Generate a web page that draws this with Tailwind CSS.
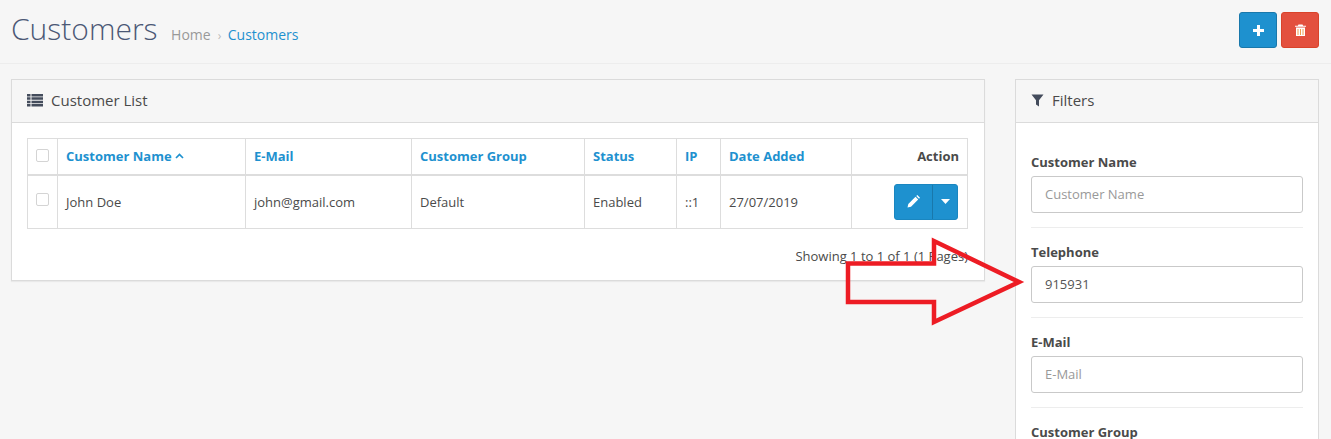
<!DOCTYPE html>
<html>
<head>
<meta charset="utf-8">
<script src="https://cdn.jsdelivr.net/npm/@tailwindcss/browser@4"></script>
</head>
<body class="relative h-[439px] w-[1331px] overflow-hidden bg-[#f6f6f6] font-['Open_Sans',sans-serif] text-[13px] text-[#4a4a4a]">
<header class="flex h-[64px] items-start justify-between border-b border-[#ededed] pl-[11px] pr-[12px]">
  <div class="flex items-baseline pt-[8px]">
    <h1 class="text-[30px] leading-[41px] font-light text-[#4b5875]">Customers</h1>
    <nav class="ml-[13.5px] flex items-baseline text-[14px] leading-[20px]">
      <span class="text-[#999]">Home</span>
      <span class="ml-[7px] mr-[6.500px] text-[12px] text-[#bbb]">›</span>
      <span class="text-[#1e91cf]">Customers</span>
    </nav>
  </div>
  <div class="flex gap-[4px] pt-[12px]">
    <div class="flex h-[36px] w-[38px] items-center justify-center rounded-[3px] border border-[#1978ab] bg-[#1e91cf]">
      <svg width="11" height="11" viewBox="0 0 11 11"><path d="M4 0h3v4h4v3H7v4H4V7H0V4h4z" fill="#fff"/></svg>
    </div>
    <div class="flex h-[36px] w-[38px] items-center justify-center rounded-[3px] border border-[#d9432a] bg-[#e3503e]">
      <svg width="11" height="12" viewBox="0 0 11 12"><path d="M3.500 0.500h4l.7 1.300H11v1H0v-1h2.800zM1 3.500h9V12H1z" fill="#fff"/><path d="M3 5v6M5.500 5v6M8 5v6" stroke="#f0a050" stroke-width="1"/></svg>
    </div>
  </div>
</header>
<main class="flex items-start justify-between pl-[11px] pr-[12px] pt-[15px]">
  <section class="w-[974px] border border-[#dbdbdb] bg-white shadow-[0_1px_1px_rgba(0,0,0,0.05)]">
    <div class="flex h-[43px] items-center border-b border-[#dbdbdb] bg-[#f6f6f6] pb-[2px] pl-[15px] text-[15px] text-[#4a4a4a]">
      <svg width="16" height="13" viewBox="0 0 16 13" class="mr-[8px] mt-[1px]"><path fill="#444c5c" d="M0 0h3.500v2.500H0zM4.500 0H16v2.500H4.500zM0 3.300h3.500v2.500H0zM4.500 3.300H16v2.500H4.500zM0 6.700h3.500v2.500H0zM4.500 6.700H16v2.500H4.500zM0 10h3.500v2.500H0zM4.500 10H16v2.500H4.500z"/></svg>
      <span>Customer List</span>
    </div>
    <div class="px-[15px] pt-[15px]">
      <table class="w-[940px] table-fixed border-collapse border border-[#dddddd]">
        <colgroup>
          <col class="w-[30px]"><col class="w-[188px]"><col class="w-[166px]"><col class="w-[173px]"><col class="w-[92px]"><col class="w-[44px]"><col class="w-[131px]"><col class="w-[116px]">
        </colgroup>
        <thead>
          <tr class="h-[36px] border-b-2 border-[#dddddd] font-bold text-[#1e91cf]">
            <th class="border-r border-[#dddddd] p-0 align-middle"><span class="mx-auto mb-[2px] block h-[13px] w-[13px] rounded-[2px] border border-[#d4d4d4]"></span></th>
            <th class="border-r border-[#dddddd] px-[8px] text-left font-bold"><span class="inline-flex items-center gap-[3px]">Customer Name <svg width="9" height="6" viewBox="0 0 9 6"><path d="M1 5l3.500-3.500L8 5" fill="none" stroke="#1e91cf" stroke-width="1.700"/></svg></span></th>
            <th class="border-r border-[#dddddd] px-[8px] text-left font-bold">E-Mail</th>
            <th class="border-r border-[#dddddd] px-[8px] text-left font-bold">Customer Group</th>
            <th class="border-r border-[#dddddd] px-[8px] text-left font-bold">Status</th>
            <th class="border-r border-[#dddddd] px-[8px] text-left font-bold">IP</th>
            <th class="border-r border-[#dddddd] px-[8px] text-left font-bold">Date Added</th>
            <th class="px-[8px] text-right font-bold text-[#4a4a4a]">Action</th>
          </tr>
        </thead>
        <tbody>
          <tr class="h-[54px]">
            <td class="border-r border-[#dddddd] p-0"><span class="mx-auto mb-[4px] block h-[13px] w-[13px] rounded-[2px] border border-[#d4d4d4]"></span></td>
            <td class="border-r border-[#dddddd] px-[8px] pt-[1px]">John Doe</td>
            <td class="border-r border-[#dddddd] px-[8px] pt-[1px]">john@gmail.com</td>
            <td class="border-r border-[#dddddd] px-[8px] pt-[1px]">Default</td>
            <td class="border-r border-[#dddddd] px-[8px] pt-[1px]">Enabled</td>
            <td class="border-r border-[#dddddd] px-[8px] pt-[1px]">::1</td>
            <td class="border-r border-[#dddddd] px-[8px] pt-[1px]">27/07/2019</td>
            <td class="px-[9px]">
              <div class="ml-auto flex h-[36px] w-[64px] overflow-hidden rounded-[3px] border border-[#1a86c0] bg-[#1e91cf]">
                <div class="flex w-[38px] items-center justify-center border-r border-[#1978ab]">
                  <svg width="13" height="13" viewBox="0 0 13 13"><path d="M0.500 12.500l.8-3.500L8.500 1.800l2.700 2.700L4 11.700zM9.300 1l1-1 2.700 2.700-1 1z" fill="#fff"/></svg>
                </div>
                <div class="flex flex-1 items-center justify-center">
                  <svg width="9" height="5" viewBox="0 0 9 5"><path d="M0 0h9L4.500 5z" fill="#fff"/></svg>
                </div>
              </div>
            </td>
          </tr>
        </tbody>
      </table>
      <p class="mt-[18px] mb-[15px] h-[18px] pr-[1px] text-right leading-[18px]">Showing 1 to 1 of 1 (1 Pages)</p>
    </div>
  </section>
  <aside class="h-[400px] w-[304px] shrink-0 border border-[#dbdbdb] bg-white">
    <div class="flex h-[43px] items-center border-b border-[#dbdbdb] bg-[#f6f6f6] pb-[2px] pl-[15px] text-[15px]">
      <svg width="13" height="13" viewBox="0 0 13 13" class="mr-[8px] mt-[1px]"><path d="M0.500 0.500h12L8 6.200V12.500L5 10.500V6.200z" fill="#444c5c"/></svg>
      <span>Filters</span>
    </div>
    <div class="px-[15px] pt-[30px]">
      <div class="border-b border-[#ededed] pb-[14px]">
        <label class="block h-[23px] font-bold leading-[18px]">Customer Name</label>
        <div class="flex h-[37px] items-center rounded-[3px] border border-[#c9c9c9] px-[13px] text-[#999]">Customer Name</div>
      </div>
      <div class="border-b border-[#ededed] pb-[14px] pt-[15px]">
        <label class="block h-[23px] font-bold leading-[18px]">Telephone</label>
        <div class="flex h-[37px] items-center rounded-[3px] border border-[#c9c9c9] px-[13px] text-[#555]">915931</div>
      </div>
      <div class="border-b border-[#ededed] pb-[14px] pt-[15px]">
        <label class="block h-[23px] font-bold leading-[18px]">E-Mail</label>
        <div class="flex h-[37px] items-center rounded-[3px] border border-[#c9c9c9] px-[13px] text-[#999]">E-Mail</div>
      </div>
      <div class="pt-[15px]">
        <label class="block h-[23px] font-bold leading-[18px]">Customer Group</label>
      </div>
    </div>
  </aside>
</main>
<svg class="absolute left-0 top-0" width="1331" height="439" viewBox="0 0 1331 439" fill="none"><path d="M848 263.500H934V241L1019 282L934 322V302H848Z" stroke="#ed1c24" stroke-width="4.500"/></svg>
</body>
</html>
